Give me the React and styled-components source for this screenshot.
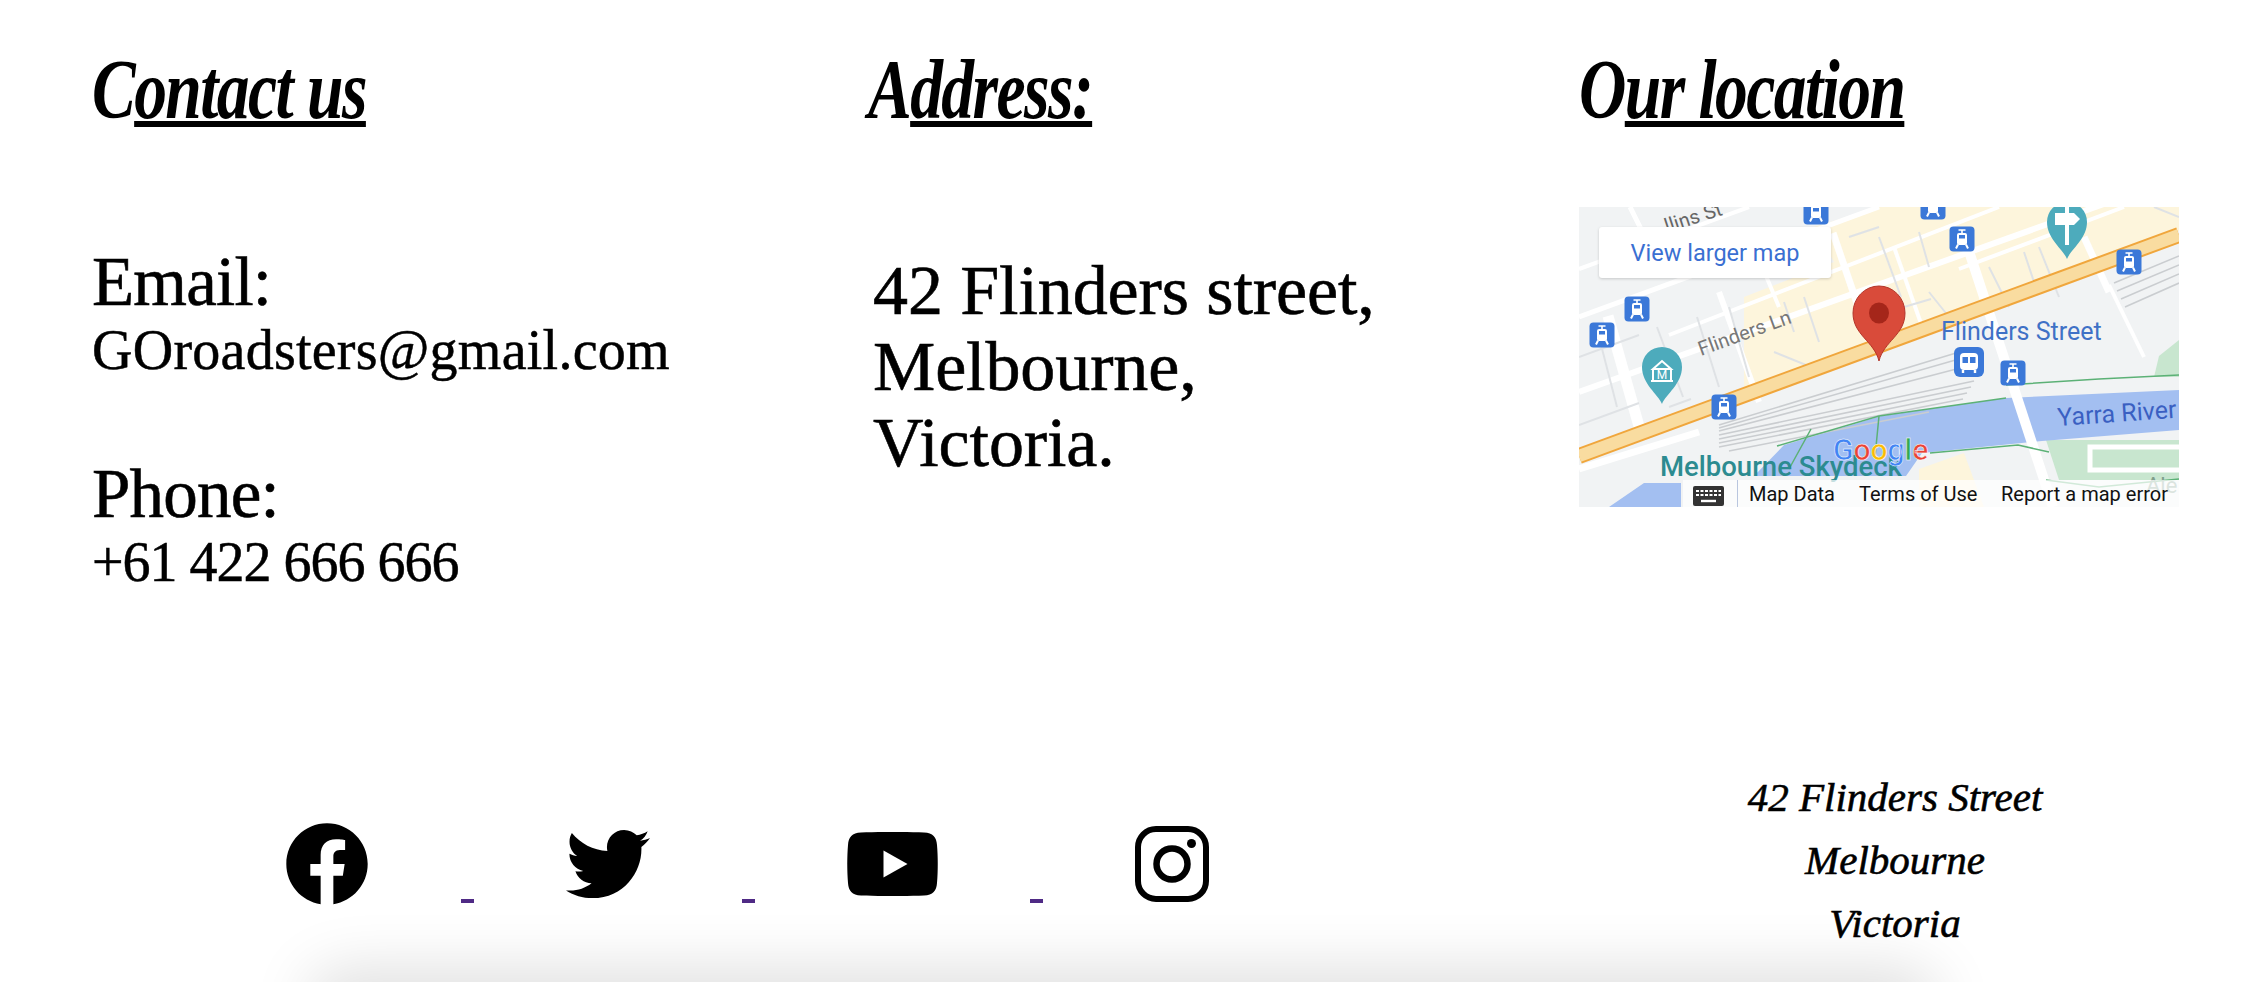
import React from 'react';
import styled, { createGlobalStyle } from 'styled-components';
import { FaFacebook, FaTwitter } from 'react-icons/fa';

const GlobalStyle = createGlobalStyle`
  html, body {
    margin: 0;
    padding: 0;
    background: #fff;
    height: 982px;
    overflow: hidden;
  }
`;

const scriptFont = `"Liberation Serif", "DejaVu Serif", serif`;
const bodyFont = `"Liberation Serif", "DejaVu Serif", serif`;
const mapFont = `Roboto, "Liberation Sans", sans-serif`;

const Page = styled.div`
  width: 2246px;
  height: 982px;
  overflow: hidden;
  color: #000;
`;

const Columns = styled.section`
  display: grid;
  grid-template-columns: 776px 711px 600px;
  padding: 50px 0 0 92px;
  height: 750px;
  box-sizing: border-box;
`;

const Column = styled.div`
  display: flex;
  flex-direction: column;
`;

const Heading = styled.h2`
  margin: 0;
  height: 80px;
  font-family: ${scriptFont};
  font-style: italic;
  font-weight: 700;
  font-size: 84px;
  line-height: 80px;
  letter-spacing: -2px;
  white-space: nowrap;
  transform: scaleX(0.78);
  transform-origin: left center;

  span {
    text-decoration: underline;
    text-decoration-thickness: 6px;
    text-underline-offset: 3px;
  }
`;

const Label = styled.div`
  font-family: ${bodyFont};
  font-size: 69px;
  line-height: 70px;
  letter-spacing: -0.8px;
  -webkit-text-stroke: 0.6px #000;
`;

const Value = styled.div`
  font-family: ${bodyFont};
  font-size: 56px;
  line-height: 66px;
  letter-spacing: ${(p) => p.$spacing}px;
  -webkit-text-stroke: 0.5px #000;
  margin-bottom: 76px;
`;

const ContactBlock = styled.div`
  margin-top: 117px;
`;

const AddressText = styled.p`
  margin: 123px 0 0 5px;
  font-family: ${bodyFont};
  font-size: 70px;
  line-height: 76px;
  letter-spacing: -0.1px;
  -webkit-text-stroke: 0.6px #000;
`;

const MapFrame = styled.div`
  position: relative;
  width: 600px;
  height: 300px;
  margin-top: 77px;
  overflow: hidden;
  background: #f1f3f4;

  svg {
    display: block;
  }
`;

const MapButton = styled.div`
  position: absolute;
  left: 20px;
  top: 20px;
  width: 232px;
  height: 51px;
  display: flex;
  align-items: center;
  justify-content: center;
  background: #fff;
  border-radius: 3px;
  box-shadow: 0 1px 3px rgba(0, 0, 0, 0.18);
  font-family: ${mapFont};
  font-size: 23.5px;
  color: #3a6fd2;
`;

const MapAttribution = styled.div`
  position: absolute;
  left: 104px;
  right: 0;
  bottom: 0;
  height: 27px;
  display: flex;
  align-items: center;
  background: rgba(255, 255, 255, 0.72);
  font-family: ${mapFont};
  font-size: 20px;
  color: #111;
  white-space: nowrap;
`;

const AttributionLink = styled.span`
  position: absolute;
  left: ${(p) => p.$left}px;
`;

const Footer = styled.footer`
  display: flex;
  justify-content: space-between;
  align-items: center;
  height: 220px;
  padding: 0 151px 0 285px;
  box-sizing: border-box;
`;

const Socials = styled.div`
  display: flex;
  align-items: center;
  gap: 92px;
  height: 84px;
  margin-top: 8px;
`;

const Dash = styled.span`
  width: 13px;
  height: 4px;
  background: #4f2a85;
  align-self: flex-end;
  margin-bottom: 3px;
`;

const FooterAddress = styled.div`
  width: 400px;
  text-align: center;
  font-family: ${scriptFont};
  font-style: italic;
  font-size: 41px;
  line-height: 63px;
  -webkit-text-stroke: 0.6px #000;
`;

const FooterEdge = styled.div`
  width: 1600px;
  height: 40px;
  margin: 15px auto 0;
  border-radius: 30px;
  box-shadow: 0 0 60px 16px rgba(0, 0, 0, 0.13);
`;

const YoutubeIcon = () => (
  <svg width="91" height="64" viewBox="0 0 91 64">
    <path d="M14 0.5 C30 -0.2 61 -0.2 77 0.5 C86 1 89.5 5 90 13 C91 25 91 39 90 51 C89.5 59 86 63 77 63.5 C61 64.2 30 64.2 14 63.5 C5 63 1.5 59 1 51 C0 39 0 25 1 13 C1.5 5 5 1 14 0.5 Z" fill="#000" />
    <path d="M36.5 18.5 L60.5 32 L36.5 45.5 Z" fill="#fff" />
  </svg>
);

const InstagramIcon = () => (
  <svg width="74" height="76" viewBox="0 0 74 76" fill="none" stroke="#000">
    <rect x="3" y="3" width="68" height="70" rx="18" strokeWidth="6" />
    <circle cx="37" cy="38" r="15.5" strokeWidth="6.5" />
    <circle cx="56.5" cy="17.5" r="4.5" fill="#000" stroke="none" />
  </svg>
);

const TramMarker = ({ x, y }) => (
  <g transform={`translate(${x - 12.5} ${y - 12.5})`}>
    <rect width="25" height="25" rx="4" fill="#3b78d8" />
    <path d="M9 3.5h7M12.5 3.5v3" stroke="#fff" strokeWidth="1.6" />
    <rect x="7.5" y="6.5" width="10" height="12" rx="2" fill="#fff" />
    <rect x="9.5" y="8.5" width="6" height="3.5" fill="#3b78d8" />
    <path d="M8.5 18 l-2 4 M16.5 18 l2 4" stroke="#fff" strokeWidth="2" />
  </g>
);

const BusMarker = ({ x, y }) => (
  <g transform={`translate(${x - 15} ${y - 15})`}>
    <rect width="30" height="30" rx="6" fill="#3b78d8" />
    <rect x="6" y="6" width="18" height="17" rx="4" fill="#fff" />
    <rect x="8.5" y="10" width="5.5" height="6" fill="#3b78d8" />
    <rect x="16" y="10" width="5.5" height="6" fill="#3b78d8" />
    <path d="M9 23v3M21 23v3" stroke="#fff" strokeWidth="2.4" />
  </g>
);

const PoiPin = ({ x, y, children }) => (
  <g transform={`translate(${x} ${y})`}>
    <path d="M0 34 C-4 24 -20 14 -20 -3 A20 20 0 0 1 20 -3 C20 14 4 24 0 34 Z" fill="#4dabbc" />
    {children}
  </g>
);

const whiteStreets = [
  [0, 110, 300, 0, 5],
  [0, 185, 600, -30, 6],
  [90, 128, 420, 0, 4],
  [0, 62, 170, 0, 4],
  [380, 62, 545, 0, 4],
  [51, 0, 69, 36, 5],
  [29, 109, 61, 223, 11],
  [140, 85, 180, 195, 6],
  [254, 26, 294, 143, 7],
  [175, 40, 200, 100, 4],
  [315, 40, 345, 125, 4],
  [383, 23, 474, 300, 10],
  [505, 30, 530, 85, 7],
  [530, 78, 565, 150, 4],
  [0, 262, 120, 225, 7],
];

const laneways = [
  [0, 150, 60, 128], [0, 218, 60, 196], [20, 130, 38, 200], [78, 120, 104, 190],
  [118, 110, 140, 180], [150, 100, 170, 170], [205, 95, 215, 125], [225, 90, 240, 135],
  [195, 145, 232, 160], [270, 30, 300, 20], [300, 30, 322, 90], [340, 25, 350, 60],
  [325, 100, 352, 92], [350, 85, 370, 110], [410, 60, 430, 100], [445, 45, 455, 75],
  [460, 40, 480, 90], [600, 10, 575, 0], [90, 200, 112, 192],
];

const tramStops = [
  [237, 5], [383, 32], [550, 55], [58, 102], [23, 128], [145, 200], [434, 166], [354, 0],
];

const railLines = [
  [140, 228, 395, 174], [140, 232, 392, 180], [140, 236, 388, 186],
  [140, 240, 384, 192], [140, 224, 385, 160], [140, 221, 380, 152],
  [140, 218, 377, 146], [150, 244, 350, 205], [535, 76, 600, 49],
  [538, 84, 600, 58], [542, 92, 600, 67], [546, 100, 600, 76],
];

const MapDrawing = () => (
  <svg width="600" height="300" viewBox="0 0 600 300">
    <polygon points="165,90 255,55 235,20 300,0 600,0 600,24 165,186" fill="#fdf5dc" />
    <polygon points="467,233 600,233 600,273 480,273" fill="#c8e6cf" />
    <polygon points="580,149 600,133 600,170 575,170" fill="#c8e6cf" />
    <polygon points="340,262 385,246 405,300 340,300" fill="#fdf5dc" />
    <polygon points="205,238 302,209 427,191 600,183 600,223 463,234 343,246 327,269 175,269" fill="#a3bff1" />
    <polygon points="0,300 30,300 65,276 102,276 102,300" fill="#a3bff1" />
    {whiteStreets.map(([x1, y1, x2, y2, w], i) => (
      <line key={i} x1={x1} y1={y1} x2={x2} y2={y2} stroke="#fff" strokeWidth={w} />
    ))}
    {laneways.map(([x1, y1, x2, y2], i) => (
      <line key={i} x1={x1} y1={y1} x2={x2} y2={y2} stroke="#dfe2e5" strokeWidth="2" />
    ))}
    {railLines.map(([x1, y1, x2, y2], i) => (
      <line key={i} x1={x1} y1={y1} x2={x2} y2={y2} stroke="#cacdd0" strokeWidth="1.6" />
    ))}
    <line x1="0" y1="249" x2="600" y2="28" stroke="#f0a63c" strokeWidth="16" />
    <line x1="0" y1="249" x2="600" y2="28" stroke="#f9dca0" strokeWidth="12" />
    <g fill="none" stroke="#5cb176" strokeWidth="1.5">
      <path d="M198 239 L300 209 L427 191" />
      <path d="M427 178 L520 172 L600 168" />
      <path d="M351 246 L439 238 L470 245" />
      <path d="M300 209 L296 250 M232 222 L210 262" />
      <path d="M467 273 L520 280 L600 272" />
    </g>
    <rect x="511" y="240" width="95" height="23" fill="#c8e6cf" stroke="#fff" strokeWidth="5" />

    {tramStops.map(([x, y], i) => (
      <TramMarker key={i} x={x} y={y} />
    ))}
    <BusMarker x={390} y={155} />
    <PoiPin x={488} y={18}>
      <path d="M-12 -12 H7 L13 -6 L7 0 H-12 Z" fill="#fff" />
      <path d="M0 -18 V20" stroke="#fff" strokeWidth="4" />
    </PoiPin>
    <PoiPin x={83} y={163}>
      <path d="M-11 11 H11 M-9 -1 H9 L0 -9 Z M-9 -1 V11 M9 -1 V11" fill="none" stroke="#fff" strokeWidth="2" />
      <text x="0" y="9" textAnchor="middle" fontFamily={mapFont} fontSize="12" fill="#fff">M</text>
    </PoiPin>

    <g fontFamily={mapFont}>
      <text x="362" y="133" fontSize="25" fill="#3f71c6">Flinders Street</text>
      <text x="479" y="219" fontSize="25" fill="#3a5fc2" transform="rotate(-4 479 219)">Yarra River</text>
      <text x="122" y="149" fontSize="20" fill="#777" transform="rotate(-20 122 149)">Flinders Ln</text>
      <text x="88" y="26" fontSize="20" fill="#666" transform="rotate(-18 88 26)">llins St</text>
      <text x="81" y="269" fontSize="27.5" fontWeight="500" fill="#2c8b90">Melbourne Skydeck</text>
      <text x="567" y="286" fontSize="22" fill="#7f9f8c">Ale</text>
      <text x="254" y="253" fontSize="30" fontWeight="500" stroke="#fff" strokeWidth="0.5">
        <tspan fill="#4285f4">G</tspan>
        <tspan fill="#ea4335">o</tspan>
        <tspan fill="#fbbc05">o</tspan>
        <tspan fill="#4285f4">g</tspan>
        <tspan fill="#34a853">l</tspan>
        <tspan fill="#ea4335">e</tspan>
      </text>
    </g>

    <path d="M300 154 C295 134 274 128 274 106 A26 27 0 0 1 326 106 C326 128 305 134 300 154 Z" fill="#d94b3a" stroke="#b3352a" strokeWidth="1" />
    <ellipse cx="300" cy="106" rx="10" ry="10.5" fill="#a5261a" />
  </svg>
);

const KeyboardIcon = styled.svg`
  position: absolute;
  left: 10px;
  top: 6px;
`;

const MapDivider = styled.span`
  position: absolute;
  left: 54px;
  top: 0;
  bottom: 0;
  width: 1px;
  background: #b9c6df;
`;

export default function App() {
  return (
    <Page>
      <GlobalStyle />
      <Columns>
        <Column>
          <Heading>C<span>ontact us</span></Heading>
          <ContactBlock>
            <Label>Email:</Label>
            <Value $spacing={0.25}>GOroadsters@gmail.com</Value>
            <Label>Phone:</Label>
            <Value $spacing={-1}>+61 422 666 666</Value>
          </ContactBlock>
        </Column>
        <Column>
          <Heading>A<span>ddress:</span></Heading>
          <AddressText>
            42 Flinders street,<br />
            Melbourne,<br />
            Victoria.
          </AddressText>
        </Column>
        <Column>
          <Heading>O<span>ur location</span></Heading>
          <MapFrame>
            <MapDrawing />
            <MapButton>View larger map</MapButton>
            <MapAttribution>
              <KeyboardIcon width="31" height="20" viewBox="0 0 31 20">
                <rect width="31" height="20" rx="2" fill="#333" />
                <path d="M3 5h25M3 9h25" stroke="#fff" strokeWidth="2" strokeDasharray="3 1.5" />
                <path d="M8 15h15" stroke="#fff" strokeWidth="2.4" />
              </KeyboardIcon>
              <MapDivider />
              <AttributionLink $left={66}>Map Data</AttributionLink>
              <AttributionLink $left={176}>Terms of Use</AttributionLink>
              <AttributionLink $left={318}>Report a map error</AttributionLink>
            </MapAttribution>
          </MapFrame>
        </Column>
      </Columns>
      <Footer>
        <Socials>
          <FaFacebook size={84} />
          <Dash />
          <FaTwitter size={84} />
          <Dash />
          <YoutubeIcon />
          <Dash />
          <InstagramIcon />
        </Socials>
        <FooterAddress>
          42 Flinders Street<br />
          Melbourne<br />
          Victoria
        </FooterAddress>
      </Footer>
      <FooterEdge />
    </Page>
  );
}
